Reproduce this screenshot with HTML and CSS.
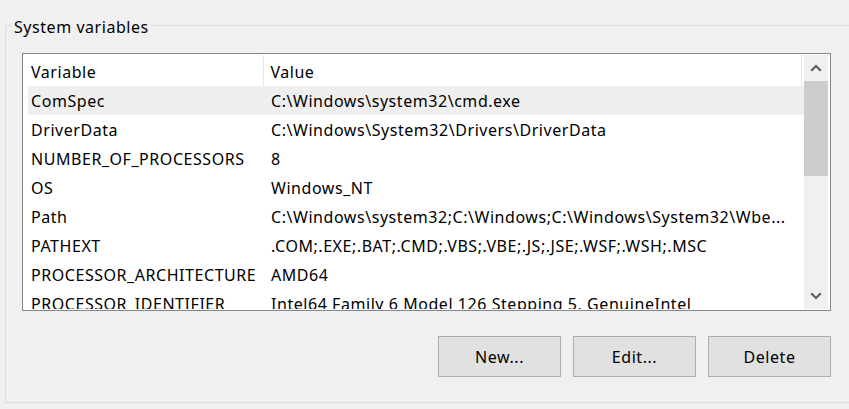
FILE: index.html
```html
<!DOCTYPE html>
<html>
<head>
<meta charset="utf-8">
<link rel="stylesheet" href="styles.css">
</head>
<body>
<fieldset class="group">
  <legend class="group-title">System variables</legend>
  <div class="list">
    <div class="list-main">
      <div class="header">
        <div class="hcell col-var">Variable</div>
        <div class="hcell col-val">Value</div>
        <div class="hcell col-rest"></div>
      </div>
      <div class="rows">
        <div class="row selected"><div class="cell col-var">ComSpec</div><div class="cell col-val">C:\Windows\system32\cmd.exe</div></div>
        <div class="row"><div class="cell col-var">DriverData</div><div class="cell col-val">C:\Windows\System32\Drivers\DriverData</div></div>
        <div class="row"><div class="cell col-var">NUMBER_OF_PROCESSORS</div><div class="cell col-val">8</div></div>
        <div class="row"><div class="cell col-var">OS</div><div class="cell col-val">Windows_NT</div></div>
        <div class="row"><div class="cell col-var">Path</div><div class="cell col-val">C:\Windows\system32;C:\Windows;C:\Windows\System32\Wbe...</div></div>
        <div class="row"><div class="cell col-var">PATHEXT</div><div class="cell col-val">.COM;.EXE;.BAT;.CMD;.VBS;.VBE;.JS;.JSE;.WSF;.WSH;.MSC</div></div>
        <div class="row"><div class="cell col-var">PROCESSOR_ARCHITECTURE</div><div class="cell col-val">AMD64</div></div>
        <div class="row"><div class="cell col-var">PROCESSOR_IDENTIFIER</div><div class="cell col-val">Intel64 Family 6 Model 126 Stepping 5, GenuineIntel</div></div>
      </div>
    </div>
    <div class="scrollbar">
      <div class="arrow">
        <svg width="12" height="8" viewBox="0 0 12 8"><path d="M1.2 6.8 L6 2 L10.8 6.8" fill="none" stroke="#606060" stroke-width="2.2"/></svg>
      </div>
      <div class="thumb"></div>
      <div class="track"></div>
      <div class="arrow">
        <svg width="12" height="8" viewBox="0 0 12 8"><path d="M1.2 1.2 L6 6 L10.8 1.2" fill="none" stroke="#606060" stroke-width="2.2"/></svg>
      </div>
    </div>
  </div>
  <div class="buttons">
    <button class="btn">New...</button>
    <button class="btn">Edit...</button>
    <button class="btn">Delete</button>
  </div>
</fieldset>
</body>
</html>
```
FILE: styles.css
```css
html, body {
  margin: 0;
  padding: 0;
  background: #f0f0f0;
  overflow: hidden;
  width: 849px;
  height: 409px;
}
body {
  font-family: "Noto Sans", "Open Sans", sans-serif;
  font-size: 16px;
  letter-spacing: 0.55px;
  color: #000;
}
.group {
  margin: 15px -30px 0 5px;
  padding: 0 0 0 6px;
  border: 1px solid #dcdcdc;
  height: 388px;
  box-sizing: border-box;
  min-width: 0;
}
.group-title {
  padding: 0 2px;
  line-height: 25px;
  height: 20px;
}
.list {
  margin: 18px 0 0 10px;
  width: 809px;
  height: 258px;
  box-sizing: border-box;
  border: 1px solid #828790;
  background: #fff;
  padding: 1px;
  display: flex;
}
.list-main {
  flex: 1;
  overflow: hidden;
  display: flex;
  flex-direction: column;
}
.header {
  display: flex;
  height: 31px;
  flex: none;
}
.hcell {
  padding-top: 3px;
  line-height: 28px;
  border-right: 1px solid #e5e5e5;
  box-sizing: border-box;
  white-space: nowrap;
}
.hcell.col-var { width: 241px; padding-left: 7px; }
.hcell.col-val { width: 539px; padding-left: 6px; }
.hcell.col-rest { width: 2px; border-right: none; }
.rows { flex: 1; overflow: hidden; }
.row {
  display: flex;
  height: 29px;
  margin-left: 4px;
  width: 776px;
  white-space: nowrap;
}
.row.selected { background: #efefef; }
.cell { padding-top: 2px; line-height: 27px; }
.cell.col-var { width: 237px; padding-left: 3px; box-sizing: border-box; }
.cell.col-val { padding-left: 6px; }
.scrollbar {
  width: 24px;
  background: #f0f0f0;
  display: flex;
  flex-direction: column;
  margin-right: 1px;
}
.arrow {
  height: 26px;
  display: flex;
  align-items: center;
  justify-content: center;
  flex: none;
}
.thumb {
  height: 95px;
  background: #cdcdcd;
  flex: none;
}
.track { flex: 1; }
.buttons {
  display: flex;
  gap: 12px;
  margin: 25px 0 0 426px;
}
.btn {
  width: 123px;
  height: 41px;
  box-sizing: border-box;
  border: 1px solid #adadad;
  background: #e1e1e1;
  font-family: "Noto Sans", "Open Sans", sans-serif;
  font-size: 16px;
  letter-spacing: 0.55px;
  color: #000;
  padding: 0;
}
```
